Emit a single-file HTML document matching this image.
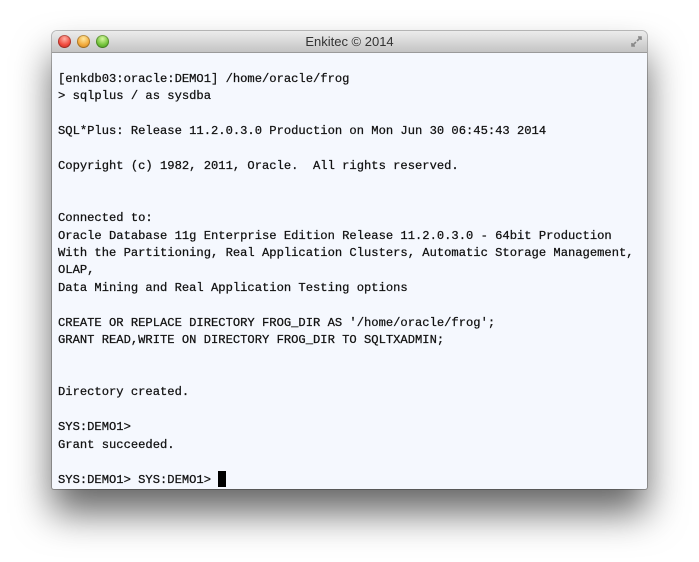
<!DOCTYPE html>
<html><head><meta charset="utf-8"><style>
html,body{margin:0;padding:0;background:#fff;width:699px;height:562px;overflow:hidden;position:relative}
.win{position:absolute;left:52px;top:31px;width:595px;height:458px;border-radius:5px 5px 2px 2px;
box-shadow:0 24px 38px rgba(0,0,0,0.6),0 0 0 1px rgba(0,0,0,0.25);background:#f5f8fe;overflow:hidden}
.tb{position:absolute;left:0;top:0;width:595px;height:21px;background:linear-gradient(#ececec,#d4d4d4 60%,#c4c4c4);border-bottom:1px solid #9a9a9a}
.tt{position:absolute;left:0;width:595px;top:3px;text-align:center;font:13px "Liberation Sans",sans-serif;color:#333}
.b{position:absolute;top:4px;width:13px;height:13px;border-radius:50%;box-shadow:inset 0 0 0 1px rgba(0,0,0,0.25)}
.term{position:absolute;left:6px;top:40px;font:12.15px/17.4px "Liberation Mono",monospace;color:#111;white-space:pre;margin:0;-webkit-text-stroke:0.25px #111}
.cur{display:inline-block;width:8px;height:16px;background:#000;vertical-align:-4px}
</style></head><body>
<div class="win">
<div class="tb">
<div class="b" style="left:6px;background:radial-gradient(circle at 50% 30%,#ffb0a5,#f0483c 55%,#b32a20)"></div>
<div class="b" style="left:25px;background:radial-gradient(circle at 50% 30%,#ffe9a0,#f2a93a 55%,#b8771f)"></div>
<div class="b" style="left:44px;background:radial-gradient(circle at 50% 30%,#d6f8a0,#72c23a 55%,#3e8a1f)"></div>
<div class="tt">Enkitec © 2014</div>
<svg style="position:absolute;left:578px;top:4px" width="13" height="13" viewBox="0 0 13 13"><path d="M7 6L11 2M8 2h3v3M6 7L2 11M2 8v3h3" stroke="#888" stroke-width="1.6" fill="none"/></svg>
</div>
<pre class="term">[enkdb03:oracle:DEMO1] /home/oracle/frog
&gt; sqlplus / as sysdba

SQL*Plus: Release 11.2.0.3.0 Production on Mon Jun 30 06:45:43 2014

Copyright (c) 1982, 2011, Oracle.  All rights reserved.


Connected to:
Oracle Database 11g Enterprise Edition Release 11.2.0.3.0 - 64bit Production
With the Partitioning, Real Application Clusters, Automatic Storage Management,
OLAP,
Data Mining and Real Application Testing options

CREATE OR REPLACE DIRECTORY FROG_DIR AS '/home/oracle/frog';
GRANT READ,WRITE ON DIRECTORY FROG_DIR TO SQLTXADMIN;


Directory created.

SYS:DEMO1&gt;
Grant succeeded.

SYS:DEMO1&gt; SYS:DEMO1&gt; <span class="cur"></span></pre>
</div>
</body></html>
